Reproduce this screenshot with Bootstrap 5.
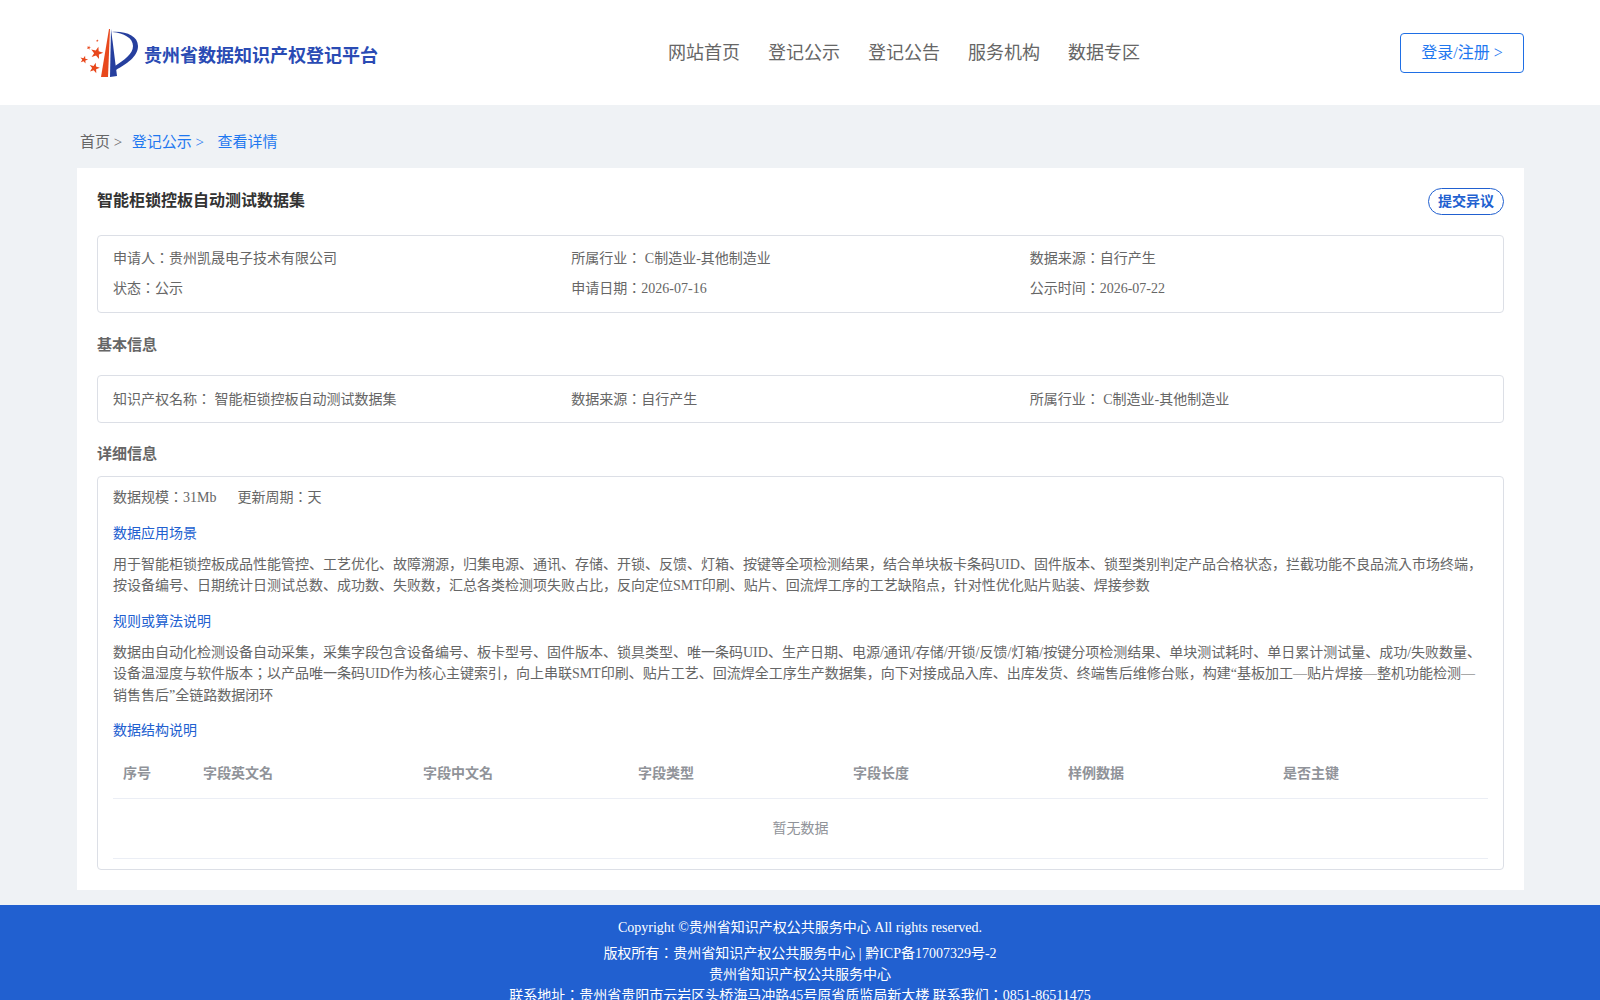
<!DOCTYPE html>
<html lang="en">
<head>
<meta charset="UTF-8" />
<title>贵州省数据知识产权登记平台</title>
<link href="https://cdn.jsdelivr.net/npm/bootstrap@5.3.0/dist/css/bootstrap.min.css" rel="stylesheet" />
<style>
body { font-family: "Liberation Serif", "Noto Sans CJK JP", serif; background: #eff2f5; color: #666; font-size: 14px; }
.top-bar { height: 105px; background: #fff; padding: 0 76px 0 76px; }
.logo-title { font-size: 18px; font-weight: 700; color: #2a4bb4; margin: 7px 0 0 2px; }
.top-nav { gap: 28px; font-size: 18px; margin: 2px 0 0 290px; }
.top-nav a { color: #666; text-decoration: none; }
.login-btn { width: 124px; height: 40px; border: 1px solid #1f6fe5; border-radius: 4px; color: #1f78f0; font-size: 16px; background: #fff; margin-left: auto; }
.crumbs { height: 63px; padding: 26.500px 0 0 80px; font-size: 15px; line-height: 20px; }
.crumbs a { color: #1f78f0; text-decoration: none; }
.crumb-a { margin-left: 9.500px; }
.crumb-b { margin-left: 13.500px; }
.sheet { margin: 0 76px 0 77px; background: #fff; padding: 20px; height: 722px; }
.sheet-title { font-size: 16px; font-weight: 700; color: #333; line-height: 24px; margin-top: 1px; }
.pill-btn { width: 76px; height: 27px; border: 1px solid #2160d0; border-radius: 14px; background: #fff; color: #2160d0; font-size: 14px; font-weight: 700; padding: 0; }
.info-box { border: 1px solid #dcdfe6; border-radius: 4px; padding: 0 15px; }
.info-box p { margin: 0; }
.info-row { display: grid; grid-template-columns: repeat(3, 1fr); line-height: 30px; }
.box-a { margin-top: 20px; height: 78px; padding-top: 8px; }
.box-b { height: 48px; padding-top: 9px; }
.box-c { height: 394px; padding-top: 6px; }
.sec-title { font-size: 15px; font-weight: 700; color: #666; line-height: 20px; }
.sec-a { margin: 22px 0 20px; }
.sec-b { margin: 21px 0 12px; }
.blue-label { color: #2160d0; line-height: 20px; margin: 11px 0 10px; }
.blue-label.gap-top { margin-top: 15px; }
.blue-label.gap-last { margin-bottom: 9px; }
.body-text { line-height: 21.4px; }
.scale-row { line-height: 30px; }
.scale-row span + span { margin-left: 21px; }
.field-table { margin: 0; table-layout: fixed; width: 100%; }
.field-table th { font-weight: 700; color: #909399; padding: 0 10px; height: 48px; vertical-align: middle; border-bottom: 1px solid #ebeef5; }
.field-table td { color: #909399; text-align: center; height: 60px; vertical-align: middle; padding: 0; border-bottom: 1px solid #ebeef5; }
.col-no { width: 80px; }
.col-en { width: 220px; }
.page-foot { margin-top: 15px; background: #2160d0; color: #fff; text-align: center; padding: 12px 0; line-height: 21px; }
.page-foot p { margin: 0; }
.page-foot .foot-first { margin-bottom: 5px; }
</style>
</head>
<body>
<header class="top-bar d-flex align-items-center">
	<svg width="66" height="58" viewBox="0 0 66 58">
		<defs>
			<path id="logo-star" d="M0-1 .235-.324 .951-.309 .38 .124 .588 .809 0 .4-.588 .809-.38 .124-.951-.309-.235-.324Z" />
		</defs>
		<g fill="#e8481c">
			<path d="M33 5 34 5 32 53 25 53Z" />
			<use href="#logo-star" transform="translate(20.700 29) rotate(15) scale(6.500)" />
			<use href="#logo-star" transform="translate(18.300 44) rotate(15) scale(5.500)" />
			<use href="#logo-star" transform="translate(8 35.700) rotate(15) scale(4.200)" />
			<use href="#logo-star" transform="translate(12.700 23.700) rotate(15) scale(2.200)" />
			<use href="#logo-star" transform="translate(21.300 16.700) rotate(15) scale(1.400)" />
		</g>
		<g fill="#263f9e">
			<path d="M35 5 41 52 34 53Z" />
			<path d="M36 8C50 7 62 12 62 22 62 33 50 40 40 46L39 42C48 36 57 30 57 22 57 14 48 9 36 8Z" />
		</g>
	</svg>
	<span class="logo-title">贵州省数据知识产权登记平台</span>
	<nav class="top-nav d-flex">
		<a href="#">网站首页</a>
		<a href="#">登记公示</a>
		<a href="#">登记公告</a>
		<a href="#">服务机构</a>
		<a href="#">数据专区</a>
	</nav>
	<button class="login-btn" type="button">登录/注册 &gt;</button>
</header>

<div class="crumbs">
	<span>首页 &gt;</span><a href="#" class="crumb-a">登记公示 &gt;</a><a href="#" class="crumb-b">查看详情</a>
</div>

<main class="sheet">
	<div class="d-flex justify-content-between align-items-start">
		<div class="sheet-title">智能柜锁控板自动测试数据集</div>
		<button class="pill-btn" type="button">提交异议</button>
	</div>

	<div class="info-box box-a">
		<div class="info-row"><span>申请人：贵州凯晟电子技术有限公司</span><span>所属行业： C制造业-其他制造业</span><span>数据来源：自行产生</span></div>
		<div class="info-row"><span>状态：公示</span><span>申请日期：2026-07-16</span><span>公示时间：2026-07-22</span></div>
	</div>

	<div class="sec-title sec-a">基本信息</div>
	<div class="info-box box-b">
		<div class="info-row"><span>知识产权名称： 智能柜锁控板自动测试数据集</span><span>数据来源：自行产生</span><span>所属行业： C制造业-其他制造业</span></div>
	</div>

	<div class="sec-title sec-b">详细信息</div>
	<div class="info-box box-c">
		<div class="scale-row"><span>数据规模：31Mb</span><span>更新周期：天</span></div>
		<div class="blue-label">数据应用场景</div>
		<p class="body-text">用于智能柜锁控板成品性能管控、工艺优化、故障溯源，归集电源、通讯、存储、开锁、反馈、灯箱、按键等全项检测结果，结合单块板卡条码UID、固件版本、锁型类别判定产品合格状态，拦截功能不良品流入市场终端，按设备编号、日期统计日测试总数、成功数、失败数，汇总各类检测项失败占比，反向定位SMT印刷、贴片、回流焊工序的工艺缺陷点，针对性优化贴片贴装、焊接参数</p>
		<div class="blue-label gap-top">规则或算法说明</div>
		<p class="body-text">数据由自动化检测设备自动采集，采集字段包含设备编号、板卡型号、固件版本、锁具类型、唯一条码UID、生产日期、电源/通讯/存储/开锁/反馈/灯箱/按键分项检测结果、单块测试耗时、单日累计测试量、成功/失败数量、设备温湿度与软件版本；以产品唯一条码UID作为核心主键索引，向上串联SMT印刷、贴片工艺、回流焊全工序生产数据集，向下对接成品入库、出库发货、终端售后维修台账，构建“基板加工—贴片焊接—整机功能检测—销售售后”全链路数据闭环</p>
		<div class="blue-label gap-top gap-last">数据结构说明</div>
		<table class="table field-table">
			<thead>
				<tr>
					<th class="col-no">序号</th>
					<th class="col-en">字段英文名</th>
					<th>字段中文名</th>
					<th>字段类型</th>
					<th>字段长度</th>
					<th>样例数据</th>
					<th>是否主键</th>
				</tr>
			</thead>
			<tbody>
				<tr><td colspan="7">暂无数据</td></tr>
			</tbody>
		</table>
	</div>
</main>

<footer class="page-foot">
	<p class="foot-first">Copyright ©贵州省知识产权公共服务中心 All rights reserved.</p>
	<p>版权所有：贵州省知识产权公共服务中心 | 黔ICP备17007329号-2</p>
	<p>贵州省知识产权公共服务中心</p>
	<p>联系地址：贵州省贵阳市云岩区头桥海马冲路45号原省质监局新大楼 联系我们：0851-86511475</p>
</footer>
</body>
</html>
